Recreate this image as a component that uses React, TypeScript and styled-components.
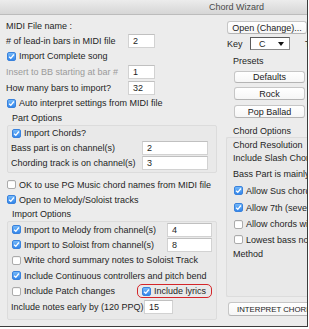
import styled, { createGlobalStyle } from "styled-components";

const GlobalStyle = createGlobalStyle`
  html, body {
    margin: 0;
    padding: 0;
    background: #ffffff;
  }
  body {
    font-family: "Liberation Sans", Arial, sans-serif;
  }
`;

const Window = styled.div`
  width: 308px;
  height: 327px;
  box-sizing: border-box;
  border-right: 1px solid #3c3c3c;
  border-bottom: 1px solid #3c3c3c;
  background: #ececec;
  display: flex;
  flex-direction: column;
  overflow: hidden;
  font-size: 9px;
  color: #1e1e1e;
`;

const TitleBar = styled.div`
  height: 14px;
  flex: none;
  border-bottom: 1px solid #bcbcbc;
  background: linear-gradient(#ececec, #d6d6d6);
  display: flex;
  align-items: center;
  padding-left: 209px;
  color: #4a4a4a;
  white-space: nowrap;
`;

const Body = styled.div`
  display: flex;
  flex: 1;
  min-height: 0;
`;

const LeftCol = styled.div`
  width: 226px;
  flex: none;
  box-sizing: border-box;
  padding: 3px 0 0 6px;
  display: flex;
  flex-direction: column;
`;

const RightCol = styled.div`
  width: 81px;
  flex: none;
  padding-top: 6px;
  display: flex;
  flex-direction: column;
  overflow: hidden;
`;

const Row = styled.div<{ $h?: number; $mt?: number }>`
  display: flex;
  align-items: center;
  height: ${(p) => p.$h ?? 15}px;
  margin-top: ${(p) => p.$mt ?? 0}px;
  white-space: nowrap;
  flex: none;
`;

const Caption = styled.span<{ $w?: number; $muted?: boolean; $pl?: number }>`
  flex: none;
  width: ${(p) => (p.$w ? `${p.$w}px` : "auto")};
  padding-left: ${(p) => p.$pl ?? 0}px;
  color: ${(p) => (p.$muted ? "#9b9b9b" : "inherit")};
`;

const Field = styled.div<{ $w: number }>`
  width: ${(p) => p.$w}px;
  height: 14px;
  flex: none;
  box-sizing: border-box;
  background: #ffffff;
  border: 1px solid #d2d2d2;
  border-top-color: #c0c0c0;
  padding-left: 4px;
  display: flex;
  align-items: center;
`;

const GroupTitle = styled.div<{ $h?: number; $mt?: number; $pl?: number }>`
  height: ${(p) => p.$h ?? 14}px;
  margin-top: ${(p) => p.$mt ?? 0}px;
  padding-left: ${(p) => p.$pl ?? 6}px;
  display: flex;
  align-items: center;
  flex: none;
  white-space: nowrap;
`;

const GroupBox = styled.div<{ $pb: number; $open?: boolean }>`
  flex: none;
  box-sizing: border-box;
  width: ${(p) => (p.$open ? "120px" : "210px")};
  margin-left: ${(p) => (p.$open ? 0 : 1)}px;
  border: 1px solid #dcdcdc;
  border-right: ${(p) => (p.$open ? "none" : "1px solid #dcdcdc")};
  border-radius: 2px;
  background: rgba(0, 0, 0, 0.012);
  padding: 0 0 ${(p) => p.$pb}px ${(p) => (p.$open ? 6 : 3)}px;
  display: flex;
  flex-direction: column;
`;

const Tick = styled.span<{ $on?: boolean }>`
  width: 9px;
  height: 9px;
  flex: none;
  box-sizing: border-box;
  margin: 0 3px 0 1px;
  border-radius: 2px;
  border: 1px solid ${(p) => (p.$on ? "#3a82dc" : "#ababab")};
  background: ${(p) => (p.$on ? "linear-gradient(#74b8f9, #3386ea)" : "#ffffff")};
  box-shadow: ${(p) => (p.$on ? "none" : "inset 0 1px 0 rgba(0,0,0,0.05)")};
  display: flex;
  align-items: center;
  justify-content: center;
`;

const Highlight = styled.div`
  display: flex;
  align-items: center;
  height: 14px;
  box-sizing: border-box;
  border: 1.5px solid #d4262a;
  border-radius: 5px;
  padding: 0 5px 0 3px;
`;

const Button = styled.div<{ $w: number; $h?: number; $ml?: number; $mt?: number }>`
  width: ${(p) => p.$w}px;
  height: ${(p) => p.$h ?? 13}px;
  margin-left: ${(p) => p.$ml ?? 0}px;
  margin-top: ${(p) => p.$mt ?? 0}px;
  flex: none;
  box-sizing: border-box;
  background: linear-gradient(#ffffff, #f6f6f6);
  border: 1px solid #c6c6c6;
  border-bottom-color: #b4b4b4;
  border-radius: 3px;
  display: flex;
  align-items: center;
  justify-content: center;
  white-space: nowrap;
  color: #1a1a1a;
`;

const WideButton = styled(Button)`
  justify-content: flex-start;
  padding-left: 8px;
  font-size: 7.8px;
`;

const Combo = styled.div`
  width: 40px;
  height: 13px;
  flex: none;
  box-sizing: border-box;
  background: #ffffff;
  border: 1px solid #5a5a5a;
  border-right-color: #8a8a8a;
  border-bottom-color: #8a8a8a;
  display: flex;
  align-items: center;
  justify-content: space-between;
  padding: 0 5px 0 8px;
`;

const Clip = styled.span<{ $ml?: number }>`
  margin-left: ${(p) => p.$ml ?? 0}px;
`;

function Check({ on, children }: { on?: boolean; children?: React.ReactNode }) {
  return (
    <>
      <Tick $on={on}>
        {on && (
          <svg width="7" height="7" viewBox="0 0 7 7">
            <path d="M1.1 3.7 L2.8 5.3 L5.9 1.5" stroke="#fff" strokeWidth="1.3" fill="none" />
          </svg>
        )}
      </Tick>
      {children}
    </>
  );
}

export default function App() {
  return (
    <>
      <GlobalStyle />
      <Window>
        <TitleBar>Chord Wizard</TitleBar>
        <Body>
          <LeftCol>
            <Row>MIDI File name :</Row>
            <Row>
              <Caption $w={122}># of lead-in bars in MIDI file</Caption>
              <Field $w={27}>2</Field>
            </Row>
            <Row $h={16}>
              <Check on>Import Complete song</Check>
            </Row>
            <Row $h={16}>
              <Caption $w={122} $muted>
                Insert to BB starting at bar #
              </Caption>
              <Field $w={27}>1</Field>
            </Row>
            <Row>
              <Caption $w={122}>How many bars to import?</Caption>
              <Field $w={27}>32</Field>
            </Row>
            <Row $h={16}>
              <Check on>Auto interpret settings from MIDI file</Check>
            </Row>

            <GroupTitle>Part Options</GroupTitle>
            <GroupBox $pb={2}>
              <Row $h={14}>
                <Check on>Import Chords?</Check>
              </Row>
              <Row>
                <Caption $w={131}>Bass part is on channel(s)</Caption>
                <Field $w={66}>2</Field>
              </Row>
              <Row>
                <Caption $w={131}>Chording track is on channel(s)</Caption>
                <Field $w={66}>3</Field>
              </Row>
            </GroupBox>

            <Row $mt={4}>
              <Check>OK to use PG Music chord names from MIDI file</Check>
            </Row>
            <Row>
              <Check on>Open to Melody/Soloist tracks</Check>
            </Row>

            <GroupTitle>Import Options</GroupTitle>
            <GroupBox $pb={5}>
              <Row>
                <Check on>
                  <Caption $w={143}>Import to Melody from channel(s)</Caption>
                </Check>
                <Field $w={45}>4</Field>
              </Row>
              <Row>
                <Check on>
                  <Caption $w={143}>Import to Soloist from channel(s)</Caption>
                </Check>
                <Field $w={45}>8</Field>
              </Row>
              <Row $h={16}>
                <Check>Write chord summary notes to Soloist Track</Check>
              </Row>
              <Row>
                <Check on>Include Continuous controllers and pitch bend</Check>
              </Row>
              <Row $h={16}>
                <Check>
                  <Caption $w={113}>Include Patch changes</Caption>
                </Check>
                <Highlight>
                  <Check on>Include lyrics</Check>
                </Highlight>
              </Row>
              <Row>
                <Caption $w={133}>Include notes early by (120 PPQ)</Caption>
                <Field $w={29}>15</Field>
              </Row>
            </GroupBox>
          </LeftCol>

          <RightCol>
            <Button $w={80} $ml={1}>
              Open (Change)...
            </Button>
            <Row $h={13} $mt={3}>
              <Caption $w={23} $pl={1}>
                Key
              </Caption>
              <Combo>
                <span>C</span>
                <svg width="6" height="4" viewBox="0 0 6 4">
                  <path d="M0 0 H6 L3 4 Z" fill="#111" />
                </svg>
              </Combo>
              <Clip $ml={15}>T</Clip>
            </Row>
            <GroupTitle $h={12} $mt={5} $pl={7}>
              Presets
            </GroupTitle>
            <Button $w={71} $h={12} $ml={8} $mt={4}>
              Defaults
            </Button>
            <Button $w={71} $ml={8} $mt={4}>
              Rock
            </Button>
            <Button $w={71} $ml={8} $mt={5}>
              Pop Ballad
            </Button>

            <GroupTitle $h={12} $mt={7} $pl={7}>
              Chord Options
            </GroupTitle>
            <GroupBox $open $pb={35}>
              <Row $h={13}>Chord Resolution</Row>
              <Row $h={14}>Include Slash Chords</Row>
              <Row $h={17}>Bass Part is mainly</Row>
              <Row $h={17}>
                <Check on>Allow Sus chords</Check>
              </Row>
              <Row $h={17}>
                <Check on>Allow 7th (seventh)</Check>
              </Row>
              <Row $h={16}>
                <Check>Allow chords with</Check>
              </Row>
              <Row $h={15}>
                <Check>Lowest bass note</Check>
              </Row>
              <Row $h={14}>Method</Row>
            </GroupBox>
            <WideButton $w={100} $h={14} $ml={2} $mt={5}>
              INTERPRET CHORDS
            </WideButton>
          </RightCol>
        </Body>
      </Window>
    </>
  );
}
